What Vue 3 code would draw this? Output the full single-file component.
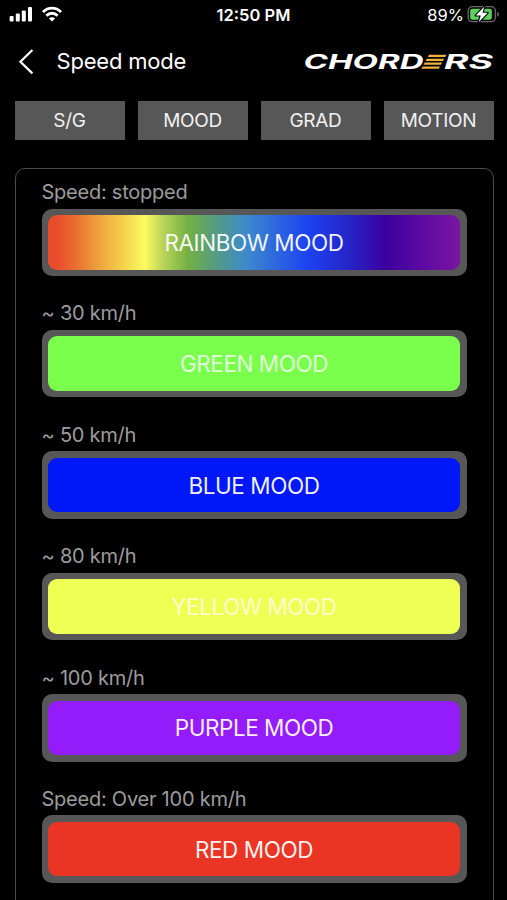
<script setup>
const tabs = ['S/G', 'MOOD', 'GRAD', 'MOTION']
const modes = [
  { label: 'Speed: stopped', name: 'RAINBOW MOOD', tone: 'rainbow' },
  { label: '~ 30 km/h', name: 'GREEN MOOD', tone: 'green' },
  { label: '~ 50 km/h', name: 'BLUE MOOD', tone: 'blue' },
  { label: '~ 80 km/h', name: 'YELLOW MOOD', tone: 'yellow' },
  { label: '~ 100 km/h', name: 'PURPLE MOOD', tone: 'purple' },
  { label: 'Speed: Over 100 km/h', name: 'RED MOOD', tone: 'red' },
]
</script>

<template>
  <main class="screen">
    <div class="status">
      <div class="status-left">
        <svg class="signal" width="24" height="16" viewBox="0 0 24 16" fill="#fff">
          <rect x="0.6" y="10" width="4" height="5.5" rx="1" />
          <rect x="6.8" y="7.5" width="4" height="8" rx="1" />
          <rect x="12.8" y="4.5" width="4" height="11" rx="1" />
          <rect x="19" y="1" width="4" height="14.5" rx="1" />
        </svg>
        <svg class="wifi" width="20" height="16" viewBox="0 0 20 16" fill="none" stroke="#fff" stroke-width="2.8">
          <path d="M1 6.1C6 .9 14 .9 19 6.1" />
          <path d="M4.4 9.7C7.6 6.4 12.4 6.4 15.6 9.7" />
          <path d="M10 15.6L6.9 12.5C8.6 10.8 11.4 10.8 13.1 12.5Z" fill="#fff" stroke="none" />
        </svg>
      </div>
      <span class="clock">12:50 PM</span>
      <div class="status-right">
        <span class="percent">89%</span>
        <svg width="34" height="20" viewBox="0 0 34 20">
          <rect x="1.2" y="2.7" width="27.2" height="15" rx="4.2" fill="none" stroke="#6b6b6b" stroke-width="1.3" />
          <path d="M30.2 7.9c2.3.7 2.3 4 0 4.8z" fill="#6b6b6b" />
          <rect x="3.2" y="4.7" width="21.6" height="11" rx="2" fill="#5bd35b" />
          <path d="M17.4 2.5L8.7 11.4H13.8L11.7 18.2L20.7 8.8H15.5Z" fill="#fff" stroke="#000" stroke-width="2.2" paint-order="stroke" stroke-linejoin="round" />
        </svg>
      </div>
    </div>

    <header class="header">
      <svg class="back" width="18" height="28" viewBox="0 0 18 28" fill="none" stroke="#fff" stroke-width="2.2">
        <path d="M15.4 2L3.4 13.7L15.4 25.4" />
      </svg>
      <h1 class="title">Speed mode</h1>
      <svg class="logo" width="194" height="24" viewBox="0 0 194 24">
        <g class="logo-text">
          <text x="3.5" y="18.8" textLength="120" lengthAdjust="spacingAndGlyphs">CHORD</text>
          <text x="144" y="18.8" textLength="49" lengthAdjust="spacingAndGlyphs">RS</text>
        </g>
        <g fill="#f0b23c">
          <path d="M129 4.8H146.4l-1.2 2.2H127.8z" />
          <path d="M126.8 8.7H144.2l-1.2 2.2H125.6z" />
          <path d="M124.7 12.6H142.1l-1.2 2.2H123.5z" />
          <path d="M122.6 16.5H140l-1.2 2.2H121.4z" />
        </g>
      </svg>
    </header>

    <nav class="tabs">
      <button v-for="tab in tabs" :key="tab" class="tab">{{ tab }}</button>
    </nav>

    <section class="panel">
      <div v-for="mode in modes" :key="mode.name" class="mode">
        <div class="label">{{ mode.label }}</div>
        <button class="pill">
          <span class="fill" :class="mode.tone">{{ mode.name }}</span>
        </button>
      </div>
    </section>
  </main>
</template>

<style>
html,
body {
  background: #000;
  overflow: hidden;
}
</style>

<style scoped>
.screen {
  box-sizing: border-box;
  width: 507px;
  height: 900px;
  overflow: hidden;
  background: #000;
  color: #fff;
  font-family: Inter, "Liberation Sans", sans-serif;
}
.status {
  display: grid;
  grid-template-columns: 1fr auto 1fr;
  align-items: center;
  height: 30px;
  padding: 0 9px;
}
.status-left {
  display: flex;
  align-items: center;
  gap: 9px;
  margin-top: -2px;
}
.clock {
  font-size: 16.5px;
  font-weight: 600;
}
.status-right {
  display: flex;
  justify-content: flex-end;
  align-items: center;
  gap: 3px;
  margin-right: -3px;
}
.status-right svg {
  margin-top: -2px;
}
.percent {
  font-size: 16.5px;
}
.header {
  display: flex;
  align-items: center;
  height: 64px;
  padding: 0 13px 0 17px;
}
.title {
  margin: -2px auto 0 21.5px;
  font-size: 22px;
  line-height: 28px;
  font-weight: 400;
  letter-spacing: -0.2px;
}
.logo {
  overflow: visible;
}
.logo-text {
  fill: #fff;
  font-family: Inter, sans-serif;
  font-size: 19.5px;
  font-style: italic;
  font-weight: 700;
}
.tabs {
  display: grid;
  grid-template-columns: repeat(4, 1fr);
  gap: 13px;
  padding: 6.5px 13.5px 0 14.5px;
}
.tab {
  height: 39.5px;
  padding: 0;
  border: 0;
  background: #575757;
  color: #f0f0f0;
  font: inherit;
  font-size: 19px;
  letter-spacing: -0.3px;
}
.panel {
  box-sizing: border-box;
  height: 780px;
  margin: 28px 13.5px 0 14.5px;
  padding: 8px 26px 0;
  border: 1.5px solid #4c4c4c;
  border-radius: 10px;
}
.mode {
  height: 121.4px;
}
.label {
  height: 31.5px;
  line-height: 30.6px;
  color: #9c9c9c;
  font-size: 20px;
  letter-spacing: -0.24px;
}
.pill {
  box-sizing: border-box;
  display: block;
  width: 100%;
  height: 67.5px;
  padding: 6.5px;
  border: 0;
  border-radius: 10px;
  background: #575757;
  color: rgba(255, 255, 255, 0.94);
  font: inherit;
  font-size: 22.5px;
  letter-spacing: -0.45px;
}
.fill {
  display: flex;
  align-items: center;
  justify-content: center;
  height: 100%;
  border-radius: 9px;
}
.rainbow {
  background: linear-gradient(
    90deg,
    #e94b2c 2%,
    #eb7031 7%,
    #eda03b 12%,
    #f4cf4b 18%,
    #fbfb60 23.5%,
    #b9d35a 28%,
    #73b043 34%,
    #579d7c 40%,
    #3d8acb 48%,
    #1c43f2 63%,
    #2524c8 73%,
    #3c00a0 82%,
    #7913a3 99%
  );
}
.green {
  background: #79ff4c;
  color: rgba(255, 255, 255, 0.8);
}
.blue {
  background: #0018f9;
}
.yellow {
  background: #f0ff54;
  color: rgba(255, 255, 255, 0.7);
}
.purple {
  background: #941cfa;
}
.red {
  background: #eb3524;
}
</style>
